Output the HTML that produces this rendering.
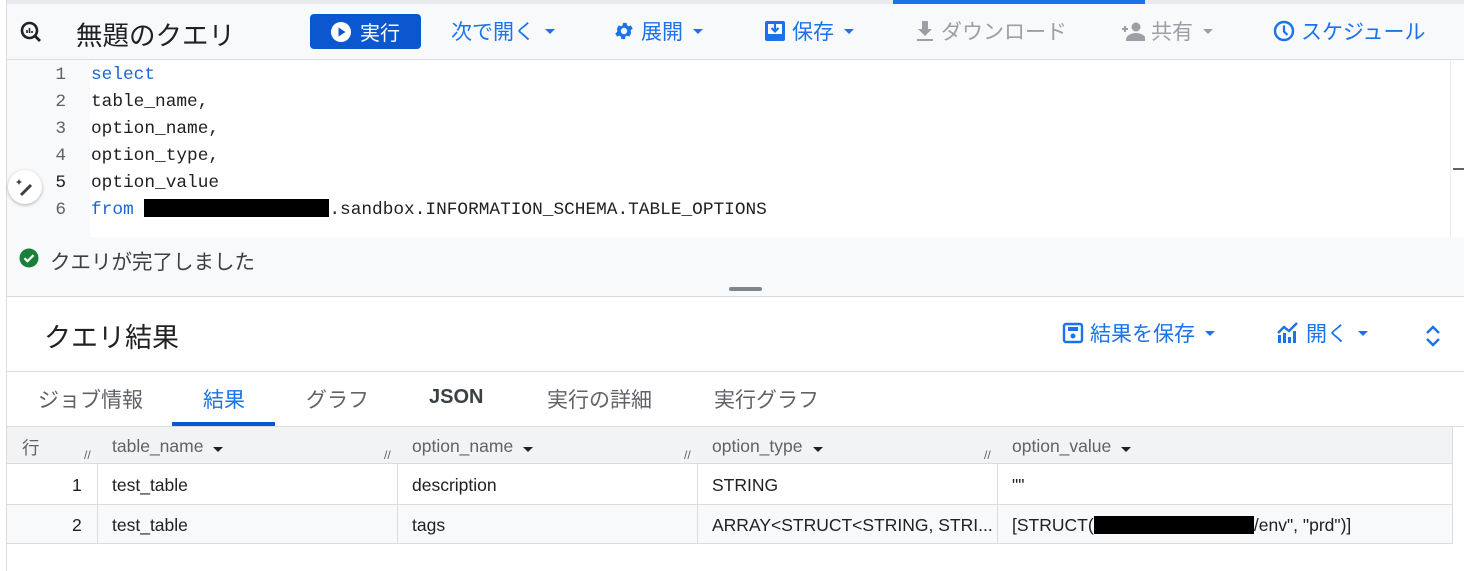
<!DOCTYPE html>
<html><head><meta charset="utf-8"><style>
*{box-sizing:border-box;margin:0;padding:0}
body{width:1464px;height:571px;overflow:hidden;background:#fff;font-family:"Liberation Sans","Noto Sans CJK JP",sans-serif;position:relative;color:#202124}
.abs{position:absolute}
.tb{color:#1a73e8;font-size:21px;display:flex;align-items:center;gap:6px;top:16px;height:30px}
.dis{color:#9aa0a6}
.caret{display:inline-block;width:0;height:0;border-left:5px solid transparent;border-right:5px solid transparent;border-top:5px solid currentColor;margin-left:4px}
.code{font-family:"Liberation Mono",monospace;font-size:17.8px;line-height:27px}
.ln{color:#5f6368;text-align:right;width:60px;left:6px}
.kw{color:#1967d2}
.th{font-size:17.5px;color:#5f6368}
.td{font-size:17.5px;color:#202124}
.vl{position:absolute;width:1px;background:#dadce0}
.tab{font-size:21px;color:#5f6368;top:384px}
</style></head><body>
<div class="abs" style="left:0;top:0;width:1464px;height:4px;background:#e8eaed"></div>
<div class="abs" style="left:893px;top:0;width:252px;height:4px;background:#1a73e8"></div>
<div class="abs" style="left:0;top:0;width:6px;height:4px;background:#fff"></div>
<div class="abs" style="left:6px;top:4px;width:1458px;height:56px;background:#f8f9fa;border-bottom:1px solid #dadce0"></div>
<div class="abs" style="left:6px;top:0;width:1px;height:571px;background:#dadce0"></div>
<svg class="abs" style="left:19px;top:20px" width="24" height="24" viewBox="0 0 24 24"><circle cx="10.5" cy="10.5" r="7.5" fill="none" stroke="#202124" stroke-width="2.6"/><path d="M16 16l5 5" stroke="#202124" stroke-width="2.8"/><path d="M8 13v-3M10.5 13v-5M13 13v-2" stroke="#202124" stroke-width="1.6"/></svg>
<div class="abs" style="left:76px;top:14px;font-size:26.5px;color:#202124">無題のクエリ</div>
<div class="abs" style="left:310px;top:14px;width:111px;height:35px;background:#0b57d0;border-radius:4px;color:#fff;font-size:20px;display:flex;align-items:center;padding-left:20px;gap:8px"><svg width="22" height="22" viewBox="0 0 22 22"><circle cx="11" cy="11" r="10" fill="#fff"/><path d="M8.5 6.5v9l7-4.5z" fill="#0b57d0"/></svg>実行</div>
<div class="abs tb" style="left:451px">次で開く<span class="caret"></span></div>
<div class="abs tb" style="left:613px"><svg width="22" height="22" viewBox="0 0 24 24"><path fill="#1a73e8" d="M19.4 13a7.5 7.5 0 000-2l2.1-1.6-2-3.5-2.5 1a7 7 0 00-1.7-1l-.4-2.7h-4l-.4 2.7a7 7 0 00-1.7 1l-2.5-1-2 3.5L4.6 11a7.5 7.5 0 000 2l-2.1 1.6 2 3.5 2.5-1a7 7 0 001.7 1l.4 2.7h4l.4-2.700a7 7 0 001.7-1l2.5 1 2-3.5zM12 15.5a3.5 3.5 0 110-7 3.5 3.5 0 010 7z"/></svg>展開<span class="caret"></span></div>
<div class="abs tb" style="left:764px"><svg width="22" height="24" viewBox="0 0 22 24"><rect x="1" y="2" width="20" height="20" rx="2" fill="#1a73e8"/><rect x="4" y="5" width="14" height="10" fill="#fff"/><path d="M11 5v7M7.5 9l3.5 3.5 3.5-3.5" stroke="#1a73e8" stroke-width="2.2" fill="none"/></svg>保存<span class="caret"></span></div>
<div class="abs tb dis" style="left:915px"><svg width="20" height="22" viewBox="0 0 20 22"><path d="M7 1h6v8h4l-7 7-7-7h4z M2 19h16v2H2z" fill="#9aa0a6"/></svg>ダウンロード</div>
<div class="abs tb dis" style="left:1121px"><svg width="24" height="20" viewBox="0 0 24 20"><circle cx="15" cy="6" r="4.5" fill="#9aa0a6"/><path d="M6 19c0-4 5-6 9-6s9 2 9 6z M1 8h6M4 5v6" fill="#9aa0a6" stroke="#9aa0a6" stroke-width="2"/></svg>共有<span class="caret"></span></div>
<div class="abs tb" style="left:1273px"><svg width="22" height="22" viewBox="0 0 22 22"><circle cx="11" cy="11" r="9" fill="none" stroke="#1a73e8" stroke-width="2.4"/><path d="M11 5.5v6l3.5 3.5" fill="none" stroke="#1a73e8" stroke-width="2.2"/></svg>スケジュール</div>
<div class="abs" style="left:7px;top:60px;width:83px;height:177px;background:#f8f9fa"></div>
<div class="abs" style="left:1450px;top:60px;width:1px;height:177px;background:#e8eaed"></div>
<div class="abs" style="left:1453px;top:168px;width:11px;height:2px;background:#5f6368"></div>
<div class="abs code ln" style="top:62px">1<br>2<br>3<br>4<br><span style="color:#202124">5</span><br>6</div>
<div class="abs code" style="left:91px;top:62px;white-space:pre"><span class="kw">select</span>
table_name,
option_name,
option_type,
option_value
<span class="kw">from</span> <span style="display:inline-block;width:185px;height:18px;background:#000;vertical-align:-3px"></span>.sandbox.INFORMATION_SCHEMA.TABLE_OPTIONS</div>
<div class="abs" style="left:8px;top:170px;width:34px;height:34px;border-radius:50%;background:#fff;box-shadow:0 1px 3px rgba(0,0,0,.3)"></div>
<svg class="abs" style="left:14px;top:176px" width="22" height="22" viewBox="0 0 22 22"><path d="M7 19l10-10" stroke="#3c4043" stroke-width="3"/><path d="M5 3l1 2 2 1-2 1-1 2-1-2-2-1 2-1z" fill="#3c4043"/></svg>
<div class="abs" style="left:7px;top:237px;width:1457px;height:60px;background:#f8f9fa;border-bottom:1px solid #dadce0"></div>
<svg class="abs" style="left:19px;top:248px" width="20" height="20" viewBox="0 0 20 20"><circle cx="10" cy="10" r="9.5" fill="#188038"/><path d="M5.5 10.2l3 3 6-6" stroke="#fff" stroke-width="2.2" fill="none"/></svg>
<div class="abs" style="left:50px;top:245px;font-size:20.5px;color:#3c4043">クエリが完了しました</div>
<div class="abs" style="left:729px;top:287px;width:33px;height:4px;border-radius:2px;background:#80868b"></div>
<div class="abs" style="left:44px;top:316px;font-size:27px;color:#202124">クエリ結果</div>
<div class="abs tb" style="left:1062px;top:318px"><svg width="22" height="22" viewBox="0 0 22 22"><rect x="2" y="2" width="18" height="18" rx="2" fill="none" stroke="#1a73e8" stroke-width="2.4"/><rect x="6" y="5" width="10" height="4" fill="#1a73e8"/><circle cx="11" cy="14" r="2.5" fill="#1a73e8"/></svg>結果を保存<span class="caret"></span></div>
<div class="abs tb" style="left:1276px;top:318px"><svg width="24" height="22" viewBox="0 0 24 22"><path d="M2 21v-8h3v8zM7 21v-10h3v10zM12 21v-6h3v6zM17 21v-12h3v12z" fill="#1a73e8"/><path d="M2 11l6-6 5 4 8-8" stroke="#1a73e8" stroke-width="2.4" fill="none"/></svg>開く<span class="caret"></span></div>
<svg class="abs" style="left:1424px;top:324px" width="18" height="24" viewBox="0 0 18 24"><path d="M3 9l6-6 6 6M3 15l6 6 6-6" stroke="#1a73e8" stroke-width="2.4" fill="none"/></svg>
<div class="abs" style="left:7px;top:371px;width:1457px;height:1px;background:#dadce0"></div>
<div class="abs tab" style="left:38px">ジョブ情報</div>
<div class="abs tab" style="left:203px;color:#1a73e8">結果</div>
<div class="abs" style="left:172px;top:422px;width:103px;height:4px;background:#0b57d0"></div>
<div class="abs tab" style="left:306px">グラフ</div>
<div class="abs tab" style="left:429px;top:386px;color:#3c4043;font-weight:bold;font-size:20px">JSON</div>
<div class="abs tab" style="left:547px">実行の詳細</div>
<div class="abs tab" style="left:714px">実行グラフ</div>
<div class="abs" style="left:7px;top:426px;width:1457px;height:1px;background:#dadce0"></div>
<div class="abs" style="left:7px;top:427px;width:1446px;height:37px;background:#f1f3f4;border-bottom:1px solid #dadce0"></div>
<div class="abs" style="left:7px;top:504px;width:1446px;height:40px;background:#f8f9fa;border-top:1px solid #dadce0;border-bottom:1px solid #dadce0"></div>
<div class="vl" style="left:97px;top:464px;height:80px"></div>
<div class="vl" style="left:397px;top:464px;height:80px"></div>
<div class="vl" style="left:697px;top:464px;height:80px"></div>
<div class="vl" style="left:997px;top:464px;height:80px"></div>
<div class="vl" style="left:1452px;top:427px;height:117px"></div>
<div class="abs th" style="left:22px;top:435px">行</div>
<div class="abs th" style="left:112px;top:436px">table_name<span class="caret" style="margin-left:10px;border-top-color:#202124"></span></div>
<div class="abs th" style="left:412px;top:436px">option_name<span class="caret" style="margin-left:10px;border-top-color:#202124"></span></div>
<div class="abs th" style="left:712px;top:436px">option_type<span class="caret" style="margin-left:10px;border-top-color:#202124"></span></div>
<div class="abs th" style="left:1012px;top:436px">option_value<span class="caret" style="margin-left:10px;border-top-color:#202124"></span></div>
<div class="abs th" style="left:84px;top:448px;font-size:12px">//</div>
<div class="abs th" style="left:384px;top:448px;font-size:12px">//</div>
<div class="abs th" style="left:684px;top:448px;font-size:12px">//</div>
<div class="abs th" style="left:984px;top:448px;font-size:12px">//</div>
<div class="abs td" style="left:72px;top:475px">1</div>
<div class="abs td" style="left:112px;top:475px">test_table</div>
<div class="abs td" style="left:412px;top:475px">description</div>
<div class="abs td" style="left:712px;top:475px">STRING</div>
<div class="abs td" style="left:1012px;top:475px">""</div>
<div class="abs td" style="left:72px;top:515px">2</div>
<div class="abs td" style="left:112px;top:515px">test_table</div>
<div class="abs td" style="left:412px;top:515px">tags</div>
<div class="abs td" style="left:712px;top:515px">ARRAY&lt;STRUCT&lt;STRING, STRI...</div>
<div class="abs td" style="left:1012px;top:515px">[STRUCT("<span style="display:inline-block;width:160px;height:18px;background:#000;vertical-align:-3px;margin-left:-6px"></span>/env", "prd")]</div>
</body></html>
